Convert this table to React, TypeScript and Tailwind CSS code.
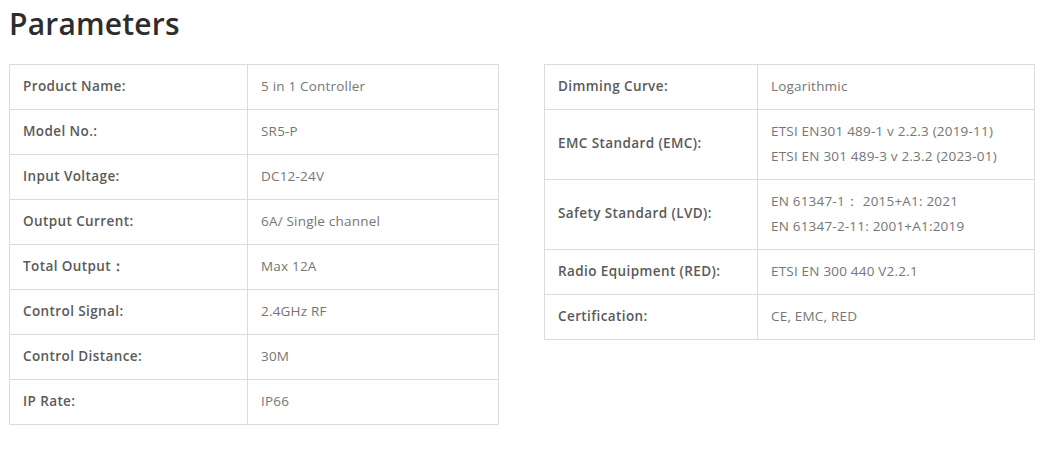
import React from "react";

type Row = { label: string; values: string[] };

const left: Row[] = [
  { label: "Product Name:", values: ["5 in 1 Controller"] },
  { label: "Model No.:", values: ["SR5-P"] },
  { label: "Input Voltage:", values: ["DC12-24V"] },
  { label: "Output Current:", values: ["6A/ Single channel"] },
  { label: "Total Output\uFF1A", values: ["Max 12A"] },
  { label: "Control Signal:", values: ["2.4GHz RF"] },
  { label: "Control Distance:", values: ["30M"] },
  { label: "IP Rate:", values: ["IP66"] },
];

const right: Row[] = [
  { label: "Dimming Curve:", values: ["Logarithmic"] },
  {
    label: "EMC Standard (EMC):",
    values: ["ETSI EN301 489-1 v 2.2.3 (2019-11)", "ETSI EN 301 489-3 v 2.3.2 (2023-01)"],
  },
  {
    label: "Safety Standard (LVD):",
    values: ["EN 61347-1\uFF1A 2015+A1: 2021", "EN 61347-2-11: 2001+A1:2019"],
  },
  { label: "Radio Equipment (RED):", values: ["ETSI EN 300 440 V2.2.1"] },
  { label: "Certification:", values: ["CE, EMC, RED"] },
];

function Table({ rows, labelW, width }: { rows: Row[]; labelW: string; width: string }) {
  return (
    <div className={`${width} border border-[#dcdcdc] border-b-0`}>
      {rows.map((r, i) => (
        <div key={i} className="flex border-b border-[#dcdcdc]">
          <div
            className={`${labelW} shrink-0 border-r border-[#dcdcdc] pl-[13px] pb-[2px] flex items-center font-semibold text-[#5a5a5a] text-[13.5px] tracking-[0.4px]`}
          >
            {r.label}
          </div>
          <div className="flex-1 pl-[13px] pt-[9px] pb-[10px] text-[13.5px] tracking-[0.2px] text-[#767676] leading-[25px]">
            {r.values.map((v, j) => (
              <div key={j} className="whitespace-pre">{v}</div>
            ))}
          </div>
        </div>
      ))}
    </div>
  );
}

export default function App() {
  return (
    <div
      className="w-[1044px] h-[451px] bg-white"
      style={{ fontFamily: '"Open Sans", "Liberation Sans", sans-serif' }}
    >
      <h1 className="pl-[9px] pt-[4px] h-[64px] text-[30px] leading-[40px] font-semibold text-[#2d2d2d] tracking-[0.2px]">
        Parameters
      </h1>
      <div className="flex items-start pl-[9px] gap-[45px]">
        <Table rows={left} labelW="w-[238px]" width="w-[490px]" />
        <Table rows={right} labelW="w-[213px]" width="w-[491px]" />
      </div>
    </div>
  );
}
